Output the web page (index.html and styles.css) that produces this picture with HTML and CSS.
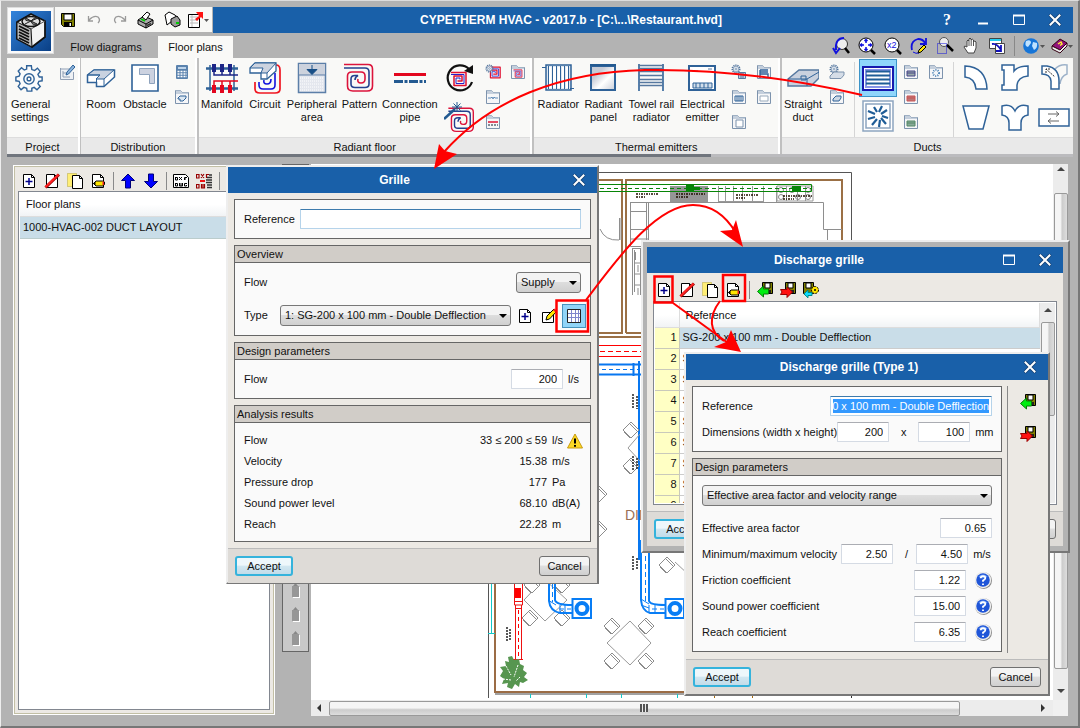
FILE: index.html
```html
<!DOCTYPE html>
<html lang="en">
<head>
<meta charset="utf-8">
<title>CYPETHERM HVAC</title>
<link rel="stylesheet" href="styles.css">
</head>
<body>
<svg class="defs" aria-hidden="true">
  <symbol id="page" viewBox="0 0 16 16"><path d="M2.500 1.500H10.500L13.500 4.500V14.500H2.500Z" fill="#fff" stroke="#000"/><path d="M10.500 1.500V4.500H13.500" fill="none" stroke="#000"/></symbol>
  <symbol id="new" viewBox="0 0 16 16"><use href="#page"/><path d="M8 5V12M4.500 8.500H11.500" stroke="#00008b" stroke-width="1.500"/></symbol>
  <symbol id="del" viewBox="0 0 16 16"><use href="#page"/><path d="M1.500 14.500L15 1.500" stroke="#900" stroke-width="3"/><path d="M1.500 14L14.500 1.500" stroke="#f22" stroke-width="2"/></symbol>
  <symbol id="copy" viewBox="0 0 16 16"><path d="M.5.500H9.500V13.500H.5Z" fill="#ffee74" stroke="#b5a642" stroke-dasharray="1 1"/><path d="M5.500 2.500H12.500L15.500 5.500V15.500H5.500Z" fill="#fff" stroke="#000"/><path d="M12.500 2.500V5.500H15.500" fill="none" stroke="#000"/></symbol>
  <symbol id="edit" viewBox="0 0 16 16"><use href="#page"/><path d="M3.500 10.500L6 8H12.500L14.500 9V11.500L13 13H6Z" fill="#ffe600" stroke="#000"/><path d="M12.500 8.500H14V12H12.500Z" fill="#e22"/><path d="M3 10.500L5.500 8.500V12.500Z" fill="#000"/></symbol>
  <symbol id="pencil" viewBox="0 0 16 16"><path d="M1.500 4.500H12.500V14.500H1.500Z" fill="#fff" stroke="#000"/><path d="M5 12L6 8L13 1L15.500 3.500L8.500 11Z" fill="#ffe600" stroke="#000"/><path d="M12 2L13.500.5L16 3L14.500 4.500Z" fill="#e22"/></symbol>
  <symbol id="disk" viewBox="0 0 16 16"><path d="M1.500 1.500H14.500V14.500H3.500L1.500 12.500Z" fill="#808000" stroke="#000"/><path d="M4 2H12V8H4Z" fill="#fff" stroke="#000"/><path d="M4 10H12V14H4Z" fill="#000"/><path d="M9.500 11H11V14H9.500Z" fill="#fff"/></symbol>
  <symbol id="diskin" viewBox="0 0 16 16"><path d="M5.500.5H15.500V11.500H5.500Z" fill="#808000" stroke="#000"/><path d="M8 1H13V6H8Z" fill="#fff" stroke="#000"/><path d="M9 8H14V11H9Z" fill="#222"/><path d="M.5 9.500L6.500 4V7H11.500V12H6.500V15Z" fill="#0e1" stroke="#087a08"/></symbol>
  <symbol id="diskout" viewBox="0 0 16 16"><path d="M5.500.5H15.500V11.500H5.500Z" fill="#808000" stroke="#000"/><path d="M8 1H13V6H8Z" fill="#fff" stroke="#000"/><path d="M9 8H14V11H9Z" fill="#222"/><path d="M12.500 10L7 5V7.500H.5L2 10L.5 12.500H7V15.500Z" fill="#f11" stroke="#900"/></symbol>
  <symbol id="diskset" viewBox="0 0 16 16"><path d="M.5.500H10.500V11.500H.5Z" fill="#808000" stroke="#000"/><path d="M3 1H8V6H3Z" fill="#fff" stroke="#000"/><circle cx="12" cy="8" r="3.500" fill="#ffe600" stroke="#000" stroke-dasharray="2 1"/><circle cx="12" cy="8" r="1" fill="#000"/><path d="M1 12L5 8V10.500H9V13.500H5V15.800Z" fill="#1df" stroke="#088"/></symbol>
  <symbol id="close" viewBox="0 0 16 16"><path d="M3.500 3.500L12.500 12.500M12.500 3.500L3.500 12.500" stroke="#123f72" stroke-width="3.500" stroke-linecap="round"/><path d="M3.500 3.500L12.500 12.500M12.500 3.500L3.500 12.500" stroke="#fff" stroke-width="2" stroke-linecap="square"/></symbol>
  <symbol id="max" viewBox="0 0 16 16"><path d="M2.500 3.500H13.500V12.500H2.500Z" fill="none" stroke="#fff"/><path d="M2 3.500H14" stroke="#fff" stroke-width="2"/></symbol>
  <symbol id="tabbed" viewBox="0 0 16 16"><path d="M1.500 1.500H6.500L8 3.500H14.500V14.500H1.500Z" fill="#f5f6f8" stroke="#7d93ad"/><path d="M2 5H14V3.500H8L6.500 1.500H2Z" fill="#c4cfdc"/></symbol>
  <symbol id="coil" viewBox="0 0 16 16"><g fill="none"><path d="M0 1.500H15V14.500H3V5H11V10H6.500" stroke="#e01030" stroke-width="1.500" stroke-linejoin="round"/><path d="M0 3.500H13V12.500H5V7H9V8.500" stroke="#22c" stroke-width="1"/></g></symbol>
  <symbol id="gear" viewBox="0 0 16 16"><circle cx="8" cy="8" r="6" fill="none" stroke="#56789f" stroke-width="2.500" stroke-dasharray="2 1.300"/><circle cx="8" cy="8" r="4.500" fill="#e9eef4" stroke="#56789f"/><circle cx="8" cy="8" r="1.500" fill="#fff" stroke="#56789f"/></symbol>
  <symbol id="spiral" viewBox="0 0 32 32"><g fill="none"><path d="M1 2.500H25Q29.500 2.500 29.500 7V24Q29.500 29 24 29H10Q4.500 29 4.500 24V14Q4.500 10 9 10H18Q22 10 22 14V17Q22 21 18 21Q14 21 15 17" stroke="#dc143c" stroke-width="1.600"/><path d="M1 6H22Q26 6 26 10V22Q26 25.500 22 25.500H12Q8 25.500 8 22V17Q8 13.500 12 13.500H15Q12 15 12 18" stroke="#24408e" stroke-width="1.600"/></g></symbol>
  <symbol id="help" viewBox="0 0 16 16"><circle cx="8.500" cy="8.500" r="7.500" fill="#888"/><circle cx="8" cy="8" r="7.300" fill="#eee"/><circle cx="8" cy="8" r="6" fill="#1f55d8"/><path d="M4 5A5 5 0 0 1 12 5Q8 8 4 5" fill="#6a9bf2"/><path d="M6 6.500Q6 4.500 8 4.500Q10.200 4.500 10 6.500Q9.800 7.500 8 8.500V9.500M8 11V12.500" fill="none" stroke="#fff" stroke-width="1.600"/></symbol>
  <symbol id="chair" viewBox="-9 -9 18 18"><path d="M0 -8L8 0L0 8L-8 0ZM-1 -6L6 1M-7 2L-1 8" fill="#fff" stroke="#8c8c8c"/></symbol>
  <symbol id="sidebtn" viewBox="0 0 12 18"><path d="M3 5H10V16H3Z" fill="#fff"/><path d="M2 4H9V15H2Z" fill="#979797"/><path d="M3 4L5.500 1L8 4Z" fill="#888"/></symbol>
</svg>

<div class="app">
  <header class="top">
    <button class="logo" aria-label="Application menu">
      <svg viewBox="0 0 40 40"><defs><linearGradient id="lg" x1="0" y1="0" x2="1" y2="1"><stop offset="0" stop-color="#3384dc"/><stop offset="1" stop-color="#0a3f85"/></linearGradient></defs><rect width="40" height="40" fill="url(#lg)"/><path d="M20 3L34 10V26L21 36L6 28V11Z" fill="#f4f4f4" stroke="#111" stroke-width="1.800" stroke-linejoin="round"/><path d="M6 11L20 18L21 36L6 28Z" fill="#bbb" stroke="#111"/><path d="M20 18L34 10" stroke="#555"/><path d="M8 15L18 20M8 18L18 23M8 21L18 26M8 24L18 29M8 27L18 32" stroke="#111" stroke-width="1.800"/><ellipse cx="20" cy="10.500" rx="9" ry="5" fill="#ddd" stroke="#111" stroke-width="1.500"/><path d="M20 10L15 7Q12 10 20 10L27 7Q25 5 20 10L26 13Q22 16 20 10L14 13" fill="#777" stroke="#222"/></svg>
    </button>
    <div class="head">
      <div class="titlerow">
        <div class="quick">
          <button aria-label="Save"><svg class="i16" ><use href="#disk"/></svg></button>
          <button aria-label="Undo"><svg class="i16" viewBox="0 0 16 16"><path d="M3 8Q8 3 12 5Q15 8 12 11M2.500 4V9H7" fill="none" stroke="#9a9a9a" stroke-width="1.300"/></svg></button>
          <button aria-label="Redo"><svg class="i16" viewBox="0 0 16 16"><path d="M13 8Q8 3 4 5Q1 8 4 11M13.500 4V9H9" fill="none" stroke="#9a9a9a" stroke-width="1.300"/></svg></button>
          <button aria-label="Print"><svg class="i18" viewBox="0 0 18 18"><path d="M1 9L7 5L16 9V13L9 17L1 13Z" fill="#aaa" stroke="#000"/><path d="M1 9L9 13L16 9M9 13V17" fill="none" stroke="#000"/><path d="M5 6L10 1L13 3L9 9Z" fill="#fff" stroke="#000"/><path d="M4 8L8 10" stroke="#0c0" stroke-width="1.500"/><path d="M10 14.500L14 12.500" stroke="#333" stroke-width="1.500"/></svg></button>
          <button aria-label="Print view"><svg class="i18" viewBox="0 0 18 18"><path d="M2 4L6 1L12 4L15 8L9 10L4 14Z" fill="#fff" stroke="#000"/><path d="M8 8L14 5L17 9V14L12 16L8 13Z" fill="#999" stroke="#000"/><path d="M13 12H16" stroke="#0c0" stroke-width="2"/></svg></button>
          <button aria-label="Export"><svg class="i18 wide" viewBox="0 0 22 18"><path d="M1.500 3.500H12.500V16.500H1.500Z" fill="#fff" stroke="#000"/><path d="M3 6H11M3 9H11M3 12H11M5 4V16" stroke="#bbb"/><path d="M8 8L12 5L9 1H16V8L14 6L10 10Z" fill="#f11"/><path d="M17 8H22L19.500 11Z" fill="#555"/></svg></button>
        </div>
        <div class="titlebar">
          <span class="title">CYPETHERM HVAC - v2017.b - [C:\...\Restaurant.hvd]</span>
          <button class="wb q" aria-label="Help">?</button>
          <button class="wb" aria-label="Minimize"><svg class="i16" viewBox="0 0 16 16"><path d="M3 11.500H13" stroke="#fff" stroke-width="2"/></svg></button>
          <button class="wb" aria-label="Maximize"><svg class="i16"><use href="#max"/></svg></button>
          <button class="wb" aria-label="Close"><svg class="i16"><use href="#close"/></svg></button>
        </div>
      </div>
      <div class="tabrow">
        <button class="tab first">Flow diagrams</button>
        <button class="tab on">Floor plans</button>
        <div class="views">
          <button aria-label="Zoom previous"><svg class="i18" viewBox="0 0 18 18"><circle cx="10" cy="7" r="5.500" fill="#eee" stroke="#333"/><path d="M13 11L17 16" stroke="#000" stroke-width="2.500"/><path d="M12 1Q3 1 4 13M1 11L4 16L8 11" fill="none" stroke="#11d" stroke-width="2"/></svg></button>
          <button aria-label="Zoom all"><svg class="i18" viewBox="0 0 18 18"><circle cx="8" cy="8" r="7" fill="#fff" stroke="#000"/><path d="M13 13L17 17" stroke="#000" stroke-width="2.500"/><path d="M8 2V6M8 10V14M2 8H6M10 8H14M6.500 4L8 2.500L9.500 4M6.500 12L8 13.500L9.500 12M4 6.500L2.500 8L4 9.500M12 6.500L13.500 8L12 9.500" fill="none" stroke="#11d" stroke-width="1.500"/></svg></button>
          <button aria-label="Zoom x2"><svg class="i18" viewBox="0 0 18 18"><circle cx="8" cy="8" r="7" fill="#fff" stroke="#000"/><path d="M13 13L17 17" stroke="#000" stroke-width="2.500"/><text x="3" y="11" font-family="Liberation Sans, sans-serif" font-size="9" fill="#11d">x2</text></svg></button>
          <button aria-label="Redraw"><svg class="i18" viewBox="0 0 18 18"><path d="M2 13Q0 4 8 2Q13 2 15 6M16 1V7H10" fill="none" stroke="#11d" stroke-width="1.800"/><path d="M3 15Q6 17 9 16" fill="none" stroke="#11d"/><path d="M8 16L9 13L14 8L16 10L11 15Z" fill="#ffe600" stroke="#000"/></svg></button>
          <button aria-label="Zoom window"><svg class="i18" viewBox="0 0 18 18"><circle cx="8" cy="5" r="4.500" fill="#eee" stroke="#555"/><path d="M11 8L17 14" stroke="#000" stroke-width="2.500"/><path d="M1.500 6.500H10.500V16.500H1.500Z" fill="none" stroke="#11d" stroke-dasharray="1 1"/></svg></button>
          <button aria-label="Pan"><svg class="i18" viewBox="0 0 18 18"><path d="M6 16L2 10Q2 8 5 10V4Q6 2 7 4V2Q8 0 9 2V3Q10 1 11.500 3V5Q13 3 14 5V11L12 16Z" fill="#fff" stroke="#444"/><path d="M7 4V9M9.200 3V9M11.500 5V9" stroke="#555"/></svg></button>
          <button aria-label="Window"><svg class="i18" viewBox="0 0 18 18"><path d="M1.500 1.500H13.500V11.500H1.500Z" fill="#fff" stroke="#444"/><path d="M2 2H13V4H2Z" fill="#2ce"/><path d="M7.500 6.500H16.500V16.500H7.500Z" fill="#fff" stroke="#444"/><path d="M4 7Q9 6 13 13M13 8V14H8" fill="none" stroke="#11b" stroke-width="1.800"/></svg></button>
          <span class="vsep"></span>
          <button aria-label="Web"><svg class="i18 wide" viewBox="0 0 22 18"><circle cx="8" cy="9" r="7.800" fill="#1675d8"/><path d="M3 4Q8 2 8 6L5 10Q1 9 3 4M10 5L14 6Q15 11 11 13L9 9Z" fill="#bfe2ff"/><path d="M17 8H22L19.500 11Z" fill="#555"/></svg></button>
          <button aria-label="Manual"><svg class="i18 wide" viewBox="0 0 22 18"><path d="M1 9L9 2L16 6L9 13Z" fill="#92127c" stroke="#301"/><path d="M1 9V12L9 16L16 9V6L9 13Z" fill="#eee" stroke="#301"/><path d="M7 7L10 5L11 7L9 8.500" fill="none" stroke="#fe3" stroke-width="1.500"/><path d="M17 8H22L19.500 11Z" fill="#555"/></svg></button>
        </div>
      </div>
    </div>
  </header>

  <nav class="ribbon">
    <section class="group g-project">
      <div class="items">
        <button class="big left w50"><svg class="i32" viewBox="0 0 32 32"><path d="M13.500 3H18.500L19 7L22 8L25 5.500L28 9L25.500 12L27 15H30V19L26.500 19.500L25.500 22L28 25L24.500 28.500L21.500 26L19 27V30H14L13.500 27L10.500 26L7.500 28.500L4.500 25L6.500 22L5.500 19.500L2 19V15L5.500 14L6.500 11.500L4.500 8.500L8 5L11 7.500L13.500 6.500Z" fill="#fafbfc" stroke="#2f6298" stroke-width="1.500"/><circle cx="16" cy="17" r="5.500" fill="none" stroke="#2f6298" stroke-width="1.500"/><circle cx="16" cy="17" r="2" fill="none" stroke="#2f6298" stroke-width="1.500"/></svg><span>General<br>settings</span></button>
        <div class="smalls w20"><button aria-label="Drawing options"><svg class="i16" viewBox="0 0 16 16"><path d="M1 5H11M1.500 4V15.500H14.500V8M4 7V13H11M4 9H8" fill="#eef1f5" stroke="#91a0b5"/><path d="M7 11L8 8L14 1L16 3L9.500 10Z" fill="#8bb3dc" stroke="#2f6298"/></svg></button></div>
      </div>
      <h2>Project</h2>
    </section>
    <section class="group g-dist">
      <div class="items">
        <button class="big w40"><svg class="i32" viewBox="0 0 32 32"><path d="M2.500 13L9 8H29.500V15L19 24.500H11.500V20.500H2.500Z" fill="#fff" stroke="#2f6298" stroke-width="1.500"/><path d="M2.500 13L9 8H29L19 17H11L15 13Z" fill="#c9d2e0" stroke="#2f6298"/><path d="M19 17V24M11.500 17V21M2.500 13H15" stroke="#2f6298"/></svg><span>Room</span></button>
        <button class="big w48"><svg class="i32" viewBox="0 0 32 32"><path d="M3 3H29V29H3Z" fill="#fff" stroke="#2f6298" stroke-width="1.600"/><path d="M10.500 6.500H25.500V21.500H20.500V12.500H10.500Z" fill="#ccd2e0" stroke="#8fa3bd"/></svg><span>Obstacle</span></button>
        <div class="smalls w26"><button aria-label="Loads"><svg class="i16" viewBox="0 0 16 16"><rect x="2" y="1" width="12" height="14" rx="1" fill="#5a82ad"/><path d="M4 3H12V5H4Z" fill="#bcd3ea"/><path d="M3.500 7.500H13M3.500 10H13M3.500 12.500H13" stroke="#fff" stroke-width="1.300" stroke-dasharray="2 1"/></svg></button><button aria-label="Room list"><svg class="i16" viewBox="0 0 16 16"><use href="#tabbed"/><path d="M4 9L6 7H12V9L9 12H6V10H4Z" fill="#dbe7f2" stroke="#2f6298"/></svg></button></div>
      </div>
      <h2>Distribution</h2>
    </section>
    <section class="group g-radiant">
      <div class="items">
        <button class="big w46"><svg class="i32" viewBox="0 0 32 32"><path d="M4 3V29M28 3V29" stroke="#2f6298" stroke-width="1.500"/><path d="M0 6.500H32M0 26.500H32" stroke="#2f6298" stroke-width="2.500"/><path d="M8 2V10M16 2V10M24 2V10" stroke="#1c2586" stroke-width="4"/><path d="M8 8V13H32M16 8V13M24 8V13" fill="none" stroke="#1c2586" stroke-width="1.500"/><path d="M8 23V31M16 23V31M24 23V31" stroke="#e3061e" stroke-width="4"/><path d="M8 25V19H32M16 25V19M24 25V19" fill="none" stroke="#e3061e" stroke-width="1.500"/></svg><span>Manifold</span></button>
        <button class="big w40"><svg class="i32" viewBox="0 0 32 32"><path d="M24 3H27Q31 3 31 8V27Q31 31 26 31H11Q6 31 6 27V20" fill="none" stroke="#f01722" stroke-width="1.700"/><path d="M26 11V23Q26 27 22 27H14Q10 27 10 23V20M22 17Q22 22 18 22Q14 22 15 18" fill="none" stroke="#11d" stroke-width="1.600"/><path d="M1 6L6 1H27V9L18 17H12V11H1Z" fill="#fff" stroke="#2f6298" stroke-width="1.300"/><path d="M1 6L6 1H27L18 11H12L14 6Z" fill="#ccd3df" stroke="#2f6298"/><path d="M18 11V17" fill="none" stroke="#2f6298"/></svg><span>Circuit</span></button>
        <button class="big w54"><svg class="i32" viewBox="0 0 32 32"><path d="M2.500 1.500H29.500V30.500H2.500Z" fill="#e4e7ee" stroke="#5c7fa8" stroke-width="1.500"/><path d="M3 2H29V13H3Z" fill="#ccd2dd"/><path d="M3 13H29" stroke="#5c7fa8"/><path d="M4 16H28M4 19H28M4 22H28M4 25H28M4 28H28" stroke="#fff" stroke-dasharray="1 1"/><path d="M16 3V8M11 7.500H21L16 12.500Z" fill="#174e86" stroke="#174e86"/></svg><span>Peripheral<br>area</span></button>
        <button class="big w41"><svg class="i32"><use href="#spiral"/></svg><span>Pattern</span></button>
        <button class="big w60"><svg class="i32" viewBox="0 0 32 32"><path d="M0 12.500H32" stroke="#e3061e" stroke-width="3"/><path d="M0 19.500H32" stroke="#235a91" stroke-width="3" stroke-dasharray="9 1.500 3 1.500"/></svg><span>Connection<br>pipe</span></button>
        <div class="pair w40"><button aria-label="Rotate coil"><svg class="i32" viewBox="0 0 32 32"><path d="M25 7A12.500 12.500 0 1 0 28 20" fill="none" stroke="#111" stroke-width="2.200"/><path d="M29 3V12L20 9Z" fill="#111"/><svg x="7" y="9" width="16" height="16"><use href="#coil"/></svg></svg></button><button aria-label="Coil wizard"><svg class="i32" viewBox="0 0 32 32"><svg x="3" y="4" width="29" height="28" viewBox="0 0 32 32"><use href="#spiral"/></svg><path d="M0 17L11 7" stroke="#235a91" stroke-width="2.500"/><path d="M13 0V10M8 5H18M9.500 1.500L16.500 8.500M16.500 1.500L9.500 8.500" stroke="#235a91"/></svg></button></div>
        <div class="smalls w26"><button aria-label="Coil settings"><svg class="i16" viewBox="0 0 16 16"><svg x="3" y="2" width="13" height="13"><use href="#coil"/></svg><svg width="9" height="9"><use href="#gear"/></svg></svg></button><button aria-label="Pipe list"><svg class="i16" viewBox="0 0 16 16"><use href="#tabbed"/><path d="M3 9L6 9L7 8L8 10L9 8L10 9H13" fill="none" stroke="#5f8bb8"/></svg></button><button aria-label="Connection list"><svg class="i16" viewBox="0 0 16 16"><use href="#tabbed"/><path d="M3 8H13" stroke="#e01030" stroke-width="1.500"/><path d="M3 11H13" stroke="#123" stroke-dasharray="2 1"/></svg></button></div>
        <div class="smalls w24"><button aria-label="Coil list"><svg class="i16" viewBox="0 0 16 16"><use href="#tabbed"/><svg x="3" y="5" width="10" height="9"><use href="#coil"/></svg></svg></button></div>
      </div>
      <h2>Radiant floor</h2>
    </section>
    <section class="group g-thermal">
      <div class="items">
        <button class="big w48"><svg class="i32" viewBox="0 0 32 32"><path d="M4 3H29V28H4Z" fill="#dfe8f1" stroke="#2f6298" stroke-width="1.500"/><path d="M8 5V26M12.500 5V26M17 5V26M21.500 5V26M25.500 5V26" stroke="#fff" stroke-width="3"/><path d="M6.500 4V27M10.500 4V27M14.500 4V27M18.500 4V27M22.500 4V27M26.500 4V27" stroke="#2f6298"/><path d="M0 5.500H4M28 26.500H32" stroke="#2f6298"/></svg><span>Radiator</span></button>
        <button class="big w42"><svg class="i32" viewBox="0 0 32 32"><defs><linearGradient id="pg" x1="0" y1="0" x2="1" y2="1"><stop offset=".3" stop-color="#c6cbd6"/><stop offset=".6" stop-color="#fff"/><stop offset="1" stop-color="#c9ced8"/></linearGradient></defs><path d="M4 4H28V28H4Z" fill="url(#pg)" stroke="#2f6298" stroke-width="2"/><path d="M3 3H29" stroke="#235a91" stroke-width="2"/></svg><span>Radiant<br>panel</span></button>
        <button class="big w54"><svg class="i32" viewBox="0 0 32 32"><path d="M4 2V29M28 2V29" stroke="#2f6298" stroke-width="1.600"/><path d="M3 3.500H29M4 6.500H28M4 9.500H28M4 13.500H28M4 17.500H28M4 20.500H28M4 23.500H28" stroke="#56789f" stroke-width="1.400"/></svg><span>Towel rail<br>radiator</span></button>
        <button class="big w48"><svg class="i32" viewBox="0 0 32 32"><path d="M3 4H29V28H3Z" fill="#fff" stroke="#2f6298" stroke-width="2"/><path d="M6 9H12M22 7H26" stroke="#56789f"/><path d="M7 21H26V26H7ZM10 21V26M14 21V26M18 21V26M22 21V26" fill="#d3dfeb" stroke="#2f6298"/></svg><span>Electrical<br>emitter</span></button>
        <div class="smalls w26"><button aria-label="Emitter settings"><svg class="i16" viewBox="0 0 16 16"><svg width="10" height="10"><use href="#gear"/></svg><path d="M7.500 8.500H14.500V14.500H7.500ZM10 9V14M12 9V14" fill="#bccddf" stroke="#56789f"/></svg></button><button aria-label="Radiator list"><svg class="i16" viewBox="0 0 16 16"><use href="#tabbed"/><path d="M4 7H12V12H4ZM6 7V12M8 7V12M10 7V12" fill="none" stroke="#2f6298"/></svg></button><button aria-label="Panel list"><svg class="i16" viewBox="0 0 16 16"><use href="#tabbed"/><path d="M5 6H12V13H5Z" fill="#fff" stroke="#7d93ad"/></svg></button></div>
        <div class="smalls w24"><button aria-label="Towel rail list"><svg class="i16" viewBox="0 0 16 16"><use href="#tabbed"/><path d="M4 6H12M4 8H12M4 10H12V14M4 6V14" stroke="#2f6298" fill="none" stroke-width="1.400"/></svg></button><button aria-label="Electrical list"><svg class="i16" viewBox="0 0 16 16"><use href="#tabbed"/><path d="M4 7H12V12H4Z" fill="#fff" stroke="#9ab"/></svg></button></div>
      </div>
      <h2>Thermal emitters</h2>
    </section>
    <section class="group g-ducts">
      <div class="items">
        <button class="big w42"><svg class="i32" viewBox="0 0 32 32"><path d="M1 17L12 8H32V16L24 24H1Z" fill="#c9d1de" stroke="#56789f" stroke-width="1.500"/><path d="M1 17H20V24M20 17L32 10M14 17V14H19V18H14" fill="none" stroke="#2f6298"/></svg><span>Straight<br>duct</span></button>
        <div class="smalls w26"><button aria-label="Duct settings"><svg class="i16" viewBox="0 0 16 16"><svg width="10" height="10"><use href="#gear"/></svg><path d="M1 12L5 8H15V11L12 14.500H1Z" fill="#d5dde7" stroke="#7d93ad"/></svg></button><button aria-label="Duct list"><svg class="i16" viewBox="0 0 16 16"><use href="#tabbed"/><path d="M4 10L7 7H12V9L10 12H4Z" fill="#cdd8e4" stroke="#2f6298"/></svg></button></div>
        <span class="isep"></span>
        <div class="pair tight w42"><button class="active" aria-label="Grille"><svg class="i32" viewBox="0 0 32 32"><path d="M1 5H31V28H1Z" fill="#fff" stroke="#1719ae" stroke-width="2"/><path d="M4 8H28V25H4Z" fill="none" stroke="#8796e8" stroke-width="2"/><path d="M4 9.500H28M4 13.500H28M4 17.500H28M4 21.500H28" stroke="#1f5d97" stroke-width="2"/></svg></button><button aria-label="Diffuser"><svg class="i32" viewBox="0 0 32 32"><path d="M1 1H31V31H1ZM4 4H28V28H4Z" fill="#fff" stroke="#8da5c0" stroke-width="1.500"/><g stroke="#1f5d97" stroke-width="2.200"><path d="M12 7L15 12M20 6L17 12M25 10L19 14M26 18L20 16M24 24L19 18M17 27L18 20M10 25L15 19M6 19L13 17M6 11L13 14"/></g></svg></button></div>
        <div class="smalls w24"><button aria-label="Supply grille list"><svg class="i16" viewBox="0 0 16 16"><use href="#tabbed"/><path d="M4 7H12V12H4ZM4 9H12" fill="#9aa" stroke="#448"/></svg></button><button aria-label="Return grille list"><svg class="i16" viewBox="0 0 16 16"><use href="#tabbed"/><path d="M4 7H12V12H4ZM4 9H12" fill="#b77" stroke="#c55"/></svg></button><button aria-label="Outdoor grille list"><svg class="i16" viewBox="0 0 16 16"><use href="#tabbed"/><path d="M4 7H12V12H4ZM4 9H12" fill="#8a9" stroke="#586"/></svg></button></div>
        <div class="smalls w26"><button aria-label="Diffuser list"><svg class="i16" viewBox="0 0 16 16"><use href="#tabbed"/><circle cx="8" cy="9" r="3" fill="none" stroke="#4c83b5" stroke-width="2" stroke-dasharray="1 1.200"/></svg></button></div>
        <span class="isep"></span>
        <div class="fittings">
          <button aria-label="Elbow"><svg class="i32" viewBox="0 0 32 32"><path d="M5 4Q26 5 27 27H16Q15 16 5 15Z" class="fit"/></svg></button>
          <button aria-label="Branch"><svg class="i32" viewBox="0 0 32 32"><path d="M3 3H15V9Q19 4 29 4V14Q19 15 18 23V28H3V23H5V8H3Z" class="fit"/></svg></button>
          <button aria-label="Split"><svg class="i32" viewBox="0 0 32 32"><path d="M17 7Q22 2 29 3V12Q23 14 22 22" fill="none" stroke="#9db2c9" stroke-width="1.500"/><path d="M4 4H9Q21 6 21 19V27H13V19Q12 12 4 12Z" class="fit"/><path d="M8 7L17 15M8 11V7H12" stroke="#333" fill="none" stroke-dasharray="2 1"/></svg></button>
          <button aria-label="Reducer"><svg class="i32" viewBox="0 0 32 32"><path d="M3 5H29L23 28H9Z" class="fit"/></svg></button>
          <button aria-label="Y branch"><svg class="i32" viewBox="0 0 32 32"><path d="M3 5Q12 2 16 10Q20 2 29 5V14Q22 15 22 22V29H10V22Q10 15 3 14Z" class="fit"/></svg></button>
          <button aria-label="Transition"><svg class="i32" viewBox="0 0 32 32"><path d="M1 8H31V25H1Z" class="fit"/><path d="M10 13H21L18 10.500M21 13L18 15.500M21 20H10L13 17.500M10 20L13 22.500" fill="none" stroke="#666"/></svg></button>
        </div>
      </div>
      <h2>Ducts</h2>
    </section>
  </nav>
  <div class="ribscroll"><span></span></div>

  <main class="work">
    <aside class="plans">
      <div class="toolbar">
        <button aria-label="New"><svg class="i16"><use href="#new"/></svg></button>
        <button aria-label="Delete"><svg class="i16"><use href="#del"/></svg></button>
        <button aria-label="Copy"><svg class="i16"><use href="#copy"/></svg></button>
        <button aria-label="Edit"><svg class="i16"><use href="#edit"/></svg></button>
        <span class="tsep"></span>
        <button aria-label="Move up"><svg class="i16" viewBox="0 0 16 16"><path d="M8 1L14.500 7.500H10.500V15H5.500V7.500H1.500Z" fill="#00f" stroke="#00007a"/></svg></button>
        <button aria-label="Move down"><svg class="i16" viewBox="0 0 16 16"><path d="M8 15L14.500 8.500H10.500V1H5.500V8.500H1.500Z" fill="#00f" stroke="#00007a"/></svg></button>
        <span class="tsep"></span>
        <button aria-label="DXF DWG files"><svg class="i16" viewBox="0 0 16 16"><path d="M.5 1.500H12.500L15.500 4.500V14.500H.5Z" fill="#fff" stroke="#000"/><path d="M2.500 4V7H4.500V4.500H2.500M6 4L9 7M9 4L6 7M11.500 7V4.500H14M11 6H13M2.500 10V13H4.500V10.500H2.500M6.500 10V13H9.500V10M8 10V13M14 10.500H11.500V13H13.500V12" fill="none" stroke="#000"/></svg></button>
        <button aria-label="DXF DWG layers"><svg class="i16" viewBox="0 0 16 16"><path d="M.5 1V5H3V1.500H.5M5 1L8 5M8 1L5 5M10.500 5V1.500H13M.5 11V15H3V11.500H.5M5.500 11V15H8.500V11M7 11V15" fill="none" stroke="#900" stroke-width="1.200"/><path d="M4 8H9" stroke="#e11" stroke-width="2"/><path d="M13 2H16M11 4.500H16M10 7H16M10 9.500H16M11 12H16M11 14.500H16" stroke="#333" stroke-width="1.500"/></svg></button>
        <span class="tsep"></span>
      </div>
      <div class="listbox">
        <table class="planlist"><thead><tr><th>Floor plans</th></tr></thead><tbody><tr><td>1000-HVAC-002 DUCT LAYOUT</td></tr></tbody></table>
      </div>
    </aside>
    <div class="sidecol"><div class="side">
      <button aria-label="Page view"><svg class="side-i"><use href="#sidebtn"/></svg></button>
      <button aria-label="Level up"><svg class="side-i"><use href="#sidebtn"/></svg></button>
      <button aria-label="Level top"><svg class="side-i"><use href="#sidebtn"/></svg></button>
    </div></div>
    <div class="view">
      <div class="canvas">
        <svg class="plan" viewBox="311 164 741 534">
          <g fill="none">
            <path d="M490 172.500H851.500V560M488.500 560V698" stroke="#555"/>
            <path d="M500 180H622V333H500M626 333V180H842V400M626 333H700M500 337H700" stroke="#9b7045" stroke-width="2"/>
            <path d="M495 560V692H1000" stroke="#9b6c45" stroke-width="2"/><path d="M495 694H1000" stroke="#444"/>
            <path d="M491.500 560V633.500M488 633.500H495M530.500 694V698M586.500 694V698M621.500 694V698M677.500 694V698" stroke="#12c8c8"/>
            <path d="M714.500 694V698M752.500 694V698" stroke="#a76c12"/><path d="M851.500 694V698" stroke="#333"/>
            <path d="M630.500 202.500H823.500V229.500H842M827.500 230V300M630.500 202V246.500H648.500V202M630.500 211.500H646.500M630.500 229.500H648M630.500 239H648M646.500 202V246M600 229Q605 241 619 240M619.500 240V218M621 240V218M632.500 248V295M632 248.500H640M634.500 250V292M634 263H641M634 274H641M634 285H641M635.500 252V260M638 265V272M638 288V295M640.500 248V295" stroke="#8e8e8e"/>
            <path d="M670 186H708V202H670Z" fill="#969696"/>
            <path d="M718.500 186V202M725.500 186V202M733.500 186V202M742.500 186V202M752.500 186V202M763.500 186V202M776.500 186V202M718 201.500H763M777 186H813V201H777ZM786.500 186V201M797.500 186V201M805.500 186V201" stroke="#999"/>
            <g stroke="#888"><circle cx="781" cy="190" r="2.500"/><circle cx="792" cy="190" r="2.500"/><circle cx="781" cy="197" r="2.500"/><circle cx="798" cy="197" r="2.500"/><circle cx="808" cy="190" r="2.500"/><circle cx="808" cy="197" r="2.500"/></g>
            <path d="M500 184.500H811.500V191.500H500" stroke="#078507"/><path d="M600 188.500H811" stroke="#078507" stroke-dasharray="4 3"/>
            <path d="M686 185H694V187H700V190H694V192H686ZM792 186H801V191H797V192H792Z" fill="#078507"/>
            <g stroke="#221100" stroke-width="1.500" stroke-dasharray="2 1 1 1"><path d="M636 194H659M636 197H646M676 194H706M676 197H688M736 195H758M736 198H745M783 196H812M783 199H794"/></g>
            <path d="M500 345.500H700M500 356.500H700" stroke="#f00"/><path d="M600 351.500H641" stroke="#f00" stroke-dasharray="5 3"/>
            <path d="M500 364.500H641M500 374.500H641M633.500 363V376M639 361V560" stroke="#0877f0" stroke-width="2"/><path d="M602 369.500H640" stroke="#0877f0" stroke-dasharray="4 3"/>
            <path d="M641 540V600Q642 611 650 613H665M649 540V601Q650 605 665 605" stroke="#087df5" stroke-width="2"/><path d="M645.500 540V602M652 609H664" stroke="#087df5" stroke-dasharray="5 3"/><path d="M641 599L649 604M641 605L649 608M649 605V613M655 605V613" stroke="#087df5"/>
            <g stroke="#999"><path d="M544 579L567 600L545 621L524 600Z"/><use href="#chair" x="521" y="609" width="18" height="18"/><use href="#chair" x="553" y="609" width="18" height="18"/><use href="#chair" x="523" y="576" width="18" height="18"/><use href="#chair" x="553" y="576" width="18" height="18"/><path d="M630 621L651 643L630 665L607 643Z"/><use href="#chair" x="603" y="617" width="18" height="18"/><use href="#chair" x="637" y="617" width="18" height="18"/><use href="#chair" x="603" y="652" width="18" height="18"/><use href="#chair" x="637" y="652" width="18" height="18"/><use href="#chair" x="658" y="556" width="18" height="18"/><path d="M675 562L690 576"/><use href="#chair" x="622" y="421" width="18" height="18"/><use href="#chair" x="622" y="457" width="18" height="18"/><path d="M640 434L628 448L640 461"/><use href="#chair" x="590" y="485" width="18" height="18"/><use href="#chair" x="590" y="520" width="18" height="18"/></g>
            <path d="M549 570V601Q550 611 560 613H572M555 570V600Q556 605 572 605" stroke="#087df5" stroke-width="2"/><path d="M552.500 584V602M559 609H571" stroke="#087df5" stroke-dasharray="5 3"/><path d="M548 600L556 605M560 605V613M565 605V613" stroke="#087df5"/>
            <g stroke="#087df5" stroke-width="2"><path d="M572.500 599H591V618H572.500ZM665.500 599H684V618H665.500Z" fill="#fff"/><circle cx="582" cy="608.500" r="5.500" stroke-width="4"/><circle cx="675" cy="608.500" r="5.500" stroke-width="4"/></g>
            <path d="M514.500 570V605H522.500V570M515.500 605V659M521.500 605V659M513 659.500H523M514 601.500H523M515 608.500H522" stroke="#e11"/><path d="M515 588H521V598H515Z" fill="#f00"/><path d="M518.500 610V658" stroke="#f00" stroke-dasharray="4 3"/>
            <g stroke="#222" stroke-width="1.500" stroke-dasharray="2 1"><path d="M633 394V408M637 396V409M633 456V470M637 458V470M633 556V570M637 558V570M507 627V641M510 629V641"/></g>
          </g>
          <path d="M508 657L512 656L514 660L519 659L520 664L524 666L523 670L527 673L524 677L528 680L523 683L520 682L519 687L515 684L512 689L507 687L508 683L502 684L504 679L500 676L503 671L500 667L506 666L505 661L509 662Z" fill="#579650"/><path d="M506 666L511 675M518 665L514 677M503 679L511 680M520 677L516 681" stroke="#fff" stroke-width="1" stroke-dasharray="2 1"/>
          <text x="625" y="520" class="room">DINING</text>
        </svg>
      </div>
      <div class="vbar"><i class="up"></i><span></span><i class="down"></i></div>
      <div class="hbar"><i class="lf"></i><span><b></b></span><i class="rt"></i></div>
    </div>
  </main>
</div>

<section class="dlg grille" role="dialog" aria-label="Grille">
  <div class="dtitle"><span>Grille</span><button class="wb" aria-label="Close"><svg class="i16"><use href="#close"/></svg></button></div>
  <div class="dbody">
    <div class="box"><div class="content"><div class="row"><label for="ref">Reference</label><input id="ref" class="focus grow" type="text"></div></div></div>
    <div class="box"><h3>Overview</h3><div class="content tall">
      <div class="row h21"><label class="grow" for="flow">Flow</label><span class="sel w65"><select id="flow"><option>Supply</option></select></span></div>
      <div class="row h21"><label class="typelab" for="type">Type</label><span class="sel grow"><select id="type"><option>1: SG-200 x 100 mm - Double Defflection</option></select></span>
        <div class="typebtns"><button aria-label="New type"><svg class="i16"><use href="#new"/></svg></button><button aria-label="Edit type"><svg class="i16"><use href="#pencil"/></svg></button><button class="gridbtn" aria-label="Type list"><svg class="i16" viewBox="0 0 16 16"><path d="M1.500 1.500H14.500V14.500H1.500Z" fill="#fff" stroke="#222"/><path d="M2 5.500H14M2 9.500H14M5.500 2V14M9.500 2V14M12.500 2V14" stroke="#7f86cc"/></svg></button></div></div>
    </div></div>
    <div class="box"><h3>Design parameters</h3><div class="content"><div class="row"><label class="grow" for="dflow">Flow</label><input id="dflow" class="num" value="200"><span class="unit">l/s</span></div></div></div>
    <div class="box"><h3>Analysis results</h3>
      <table class="results"><tbody>
        <tr><th>Flow</th><td>33 ≤ 200 ≤ 59</td><td class="u"><span>l/s<svg class="i16" viewBox="0 0 16 16"><path d="M8 1L15.500 15H.5Z" fill="#fbd824" stroke="#c89b12" stroke-linejoin="round"/><path d="M8 5.500V10.500M8 12V13.800" stroke="#000" stroke-width="2"/></svg></span></td></tr>
        <tr><th>Velocity</th><td>15.38</td><td class="u">m/s</td></tr>
        <tr><th>Pressure drop</th><td>177</td><td class="u">Pa</td></tr>
        <tr><th>Sound power level</th><td>68.10</td><td class="u">dB(A)</td></tr>
        <tr><th>Reach</th><td>22.28</td><td class="u">m</td></tr>
      </tbody></table>
    </div>
  </div>
  <footer><button class="btn ok">Accept</button><button class="btn">Cancel</button></footer>
</section>

<section class="dlg discharge" role="dialog" aria-label="Discharge grille">
  <div class="dtitle"><span>Discharge grille</span><button class="wb" aria-label="Maximize"><svg class="i16"><use href="#max"/></svg></button><button class="wb" aria-label="Close"><svg class="i16"><use href="#close"/></svg></button></div>
  <div class="dbody listbody">
    <div class="toolbar">
      <button aria-label="New"><svg class="i16"><use href="#new"/></svg></button>
      <button aria-label="Delete"><svg class="i16"><use href="#del"/></svg></button>
      <button aria-label="Copy"><svg class="i16"><use href="#copy"/></svg></button>
      <button aria-label="Edit"><svg class="i16"><use href="#edit"/></svg></button>
      <span class="tsep"></span>
      <button aria-label="Import"><svg class="i16"><use href="#diskin"/></svg></button>
      <button aria-label="Export"><svg class="i16"><use href="#diskout"/></svg></button>
      <button aria-label="Library options"><svg class="i16"><use href="#diskset"/></svg></button>
    </div>
    <div class="tablebox">
      <div class="clip"><table class="types"><thead><tr><th></th><th>Reference</th></tr></thead><tbody>
        <tr class="cur"><th>1</th><td>SG-200 x 100 mm - Double Defflection</td></tr>
        <tr><th>2</th><td>S</td></tr><tr><th>3</th><td>S</td></tr><tr><th>4</th><td>S</td></tr><tr><th>5</th><td>S</td></tr><tr><th>6</th><td>S</td></tr><tr><th>7</th><td>S</td></tr><tr><th>8</th><td>S</td></tr><tr><th>9</th><td>S</td></tr>
      </tbody></table></div>
      <div class="vbar"><i class="up"></i><span class="short"></span></div>
    </div>
  </div>
  <footer><button class="btn ok">Accept</button><button class="btn">Cancel</button></footer>
</section>

<section class="dlg type1" role="dialog" aria-label="Discharge grille (Type 1)">
  <div class="dtitle"><span>Discharge grille (Type 1)</span><button class="wb" aria-label="Close"><svg class="i16"><use href="#close"/></svg></button></div>
  <div class="split">
    <div class="dbody">
      <div class="box"><div class="content">
        <div class="row"><label class="grow" for="tref">Reference</label><input id="tref" class="focus picked" type="text" value="SG-200 x 100 mm - Double Defflection"></div>
        <div class="row"><label class="grow" for="dw">Dimensions (width x height)</label><input id="dw" class="num" value="200"><span class="mid wide29">x</span><input class="num" aria-label="Height" value="100"><span class="unit u22">mm</span></div>
      </div></div>
      <div class="box"><h3>Design parameters</h3><div class="content">
        <div class="row h21 last"><span class="sel grow"><select aria-label="Method"><option>Effective area factor and velocity range</option></select></span></div>
        <div class="row"><label class="grow" for="eaf">Effective area factor</label><input id="eaf" class="num" value="0.65"></div>
        <div class="row"><label class="grow" for="vmin">Minimum/maximum velocity</label><input id="vmin" class="num" value="2.50"><span class="mid">/</span><input class="num" aria-label="Maximum velocity" value="4.50"><span class="unit u24">m/s</span></div>
        <div class="row"><label class="grow" for="fc">Friction coefficient</label><input id="fc" class="num" value="1.22"><button class="qm" aria-label="Help"><svg class="i18"><use href="#help"/></svg></button></div>
        <div class="row"><label class="grow" for="sp">Sound power coefficient</label><input id="sp" class="num" value="15.00"><button class="qm" aria-label="Help"><svg class="i18"><use href="#help"/></svg></button></div>
        <div class="row"><label class="grow" for="rc">Reach coefficient</label><input id="rc" class="num" value="6.35"><button class="qm" aria-label="Help"><svg class="i18"><use href="#help"/></svg></button></div>
      </div></div>
    </div>
    <div class="lib"><button aria-label="Import"><svg class="i16"><use href="#diskin"/></svg></button><button aria-label="Export"><svg class="i16"><use href="#diskout"/></svg></button></div>
  </div>
  <footer><button class="btn ok">Accept</button><button class="btn">Cancel</button></footer>
</section>

<svg class="notes" viewBox="0 0 1080 728" aria-hidden="true">
  <g fill="none" stroke="#f00" stroke-width="2">
    <path d="M862 95C780 76 705 69 645 70C560 72 490 100 444 152"/>
    <path d="M586 300C615 262 655 205 693 205C712 205 726 216 736 233"/>
    <path d="M673 303L728 343"/><path d="M720 301C708 317 709 332 724 341"/>
    <path d="M654.500 276.500H672.500V302.500H654.500ZM723 275H745V301H723ZM556.500 300.500H588V331.500H556.500Z" stroke-width="2.500"/>
  </g>
  <path d="M434 169L439 144L445 151L457 154ZM743 247L720 231L732 230L736 220ZM741 352L714 347L726 342L731 330Z" fill="#f00"/>
</svg>
</body>
</html>
```

FILE: styles.css
```css
* { box-sizing: border-box; }
body { margin: 0; background: #b3b3b3; font: 11px/13px "Liberation Sans", Arial, sans-serif; color: #111; }
button, input, select { font: inherit; color: inherit; margin: 0; }
button { padding: 0; border: 0; background: none; display: flex; align-items: center; justify-content: center; flex: none; }
svg { display: block; flex: none; }
h2, h3 { margin: 0; font: inherit; }
table { border-collapse: collapse; border-spacing: 0; }
th { font-weight: normal; text-align: left; }
.defs { position: absolute; width: 0; height: 0; }
.i16 { width: 16px; height: 16px; }
.i18 { width: 18px; height: 18px; }
.i18.wide { width: 22px; }
.i32 { width: 32px; height: 32px; }
.fit { fill: #fff; stroke: #2f6298; stroke-width: 1.5px; }
.grow { flex: 1; min-width: 0; }
.w20 { width: 20px; }
.w24 { width: 24px; }
.w26 { width: 26px; }
.w40 { width: 40px; }
.w41 { width: 41px; }
.w42 { width: 42px; }
.w46 { width: 46px; }
.w48 { width: 48px; }
.w50 { width: 50px; }
.w54 { width: 54px; }
.w60 { width: 60px; }
.w65 { width: 65px; }

.app { display: flex; flex-direction: column; min-height: 100vh; padding: 5px 5px 10px; border: 1px solid #777; border-width: 1px 2px 2px 1px; border-top-color: #ddd; border-left-color: #eee; }
.top { display: flex; margin: 1px 0 0 1px; }
.logo { width: 47px; height: 47px; background: #fafafa; border: 1px solid #ddd; }
.logo svg { width: 40px; height: 40px; }
.head { flex: 1; }
.titlerow { display: flex; height: 26px; }
.quick { display: flex; align-items: center; width: 157px; height: 25px; margin: 0 1px; background: #f8f8f6; }
.quick button { width: 26px; height: 24px; }
.titlebar { display: flex; flex: 1; align-items: center; background: #1960a9; color: #fff; }
.title, .dtitle span { flex: 1; text-align: center; font-size: 12px; font-weight: bold; }
.wb { width: 36px; height: 26px; }
.q { font: bold 16px "Liberation Serif", serif; color: #fff; }
.tabrow { display: flex; align-items: flex-end; height: 25px; }
.tab { height: 22px; width: 75px; }
.tab.first { width: 104px; }
.tab.on { background: #f9f9f7; }
.views { display: flex; align-items: center; gap: 8px; height: 25px; margin-left: auto; padding-right: 2px; }
.views .wide { margin-right: -2px; }
.vsep { width: 1px; height: 20px; background: #888; }

.ribbon { display: flex; height: 96px; margin-left: 1px; background: #c0c0c0; }
.group { display: flex; flex-direction: column; background: #f9f9f7; border-right: 2px solid #fff; margin-right: 2px; }
.g-project { width: 73px; margin-right: 1px; }
.g-dist { width: 116px; }
.g-radiant { width: 334px; }
.g-thermal { width: 246px; }
.g-ducts { flex: 1; margin-right: 0; border: 0; }
.items { display: flex; flex: 1; min-height: 0; padding-top: 4px; }
.group h2 { flex: none; height: 17px; padding-top: 3px; text-align: center; background: #e9e9e9; border-top: 1px solid #ddd; }
.big { flex-direction: column; justify-content: flex-start; gap: 4px; height: 72px; }
.big span { white-space: nowrap; }
.left { align-items: flex-start; padding-left: 4px; text-align: left; }
.left svg { margin-left: 3px; width: 30px; }
.smalls { display: flex; flex-direction: column; align-items: center; gap: 9px; padding-top: 2px; }
.pair { display: flex; flex-direction: column; align-items: center; gap: 8px; }
.pair.tight { gap: 3px; margin-top: -3px; }
.active { width: 38px; height: 38px; background: #8fd6fb; border: 1px solid #3c94c8; }
.isep { width: 1px; height: 76px; margin: 0 2px 0 4px; background: #d5d5d5; }
.fittings { display: grid; grid-template-columns: repeat(3, 39px); grid-auto-rows: 32px; row-gap: 7px; }
.fittings button { width: 39px; }
.ribscroll { height: 3px; margin-left: 1px; background: #bbbbbe; }
.ribscroll span { display: block; width: 66%; height: 3px; background: #70757d; }

.work { display: flex; flex: 1; padding: 7px 5px 0 7px; }
.plans { display: flex; flex-direction: column; width: 262px; margin: 1px 0; padding: 4px; background: #ece9e4; border: 1px solid #fff; outline: 1px solid #c2bfa5; outline-offset: -2px; }
.toolbar { display: flex; align-items: center; height: 21px; gap: 3px; padding-left: 1px; }
.toolbar button { width: 20px; height: 20px; }
.tsep { width: 1px; height: 18px; margin: 0 1px 0 2px; background: #8a8a8a; }
.listbox { flex: 1; border: 1px solid #828790; background: #fff; padding: 1px; }
.planlist { width: 100%; }
.planlist th { height: 23px; padding: 0 6px; background: linear-gradient(#fff 50%, #f1f3f5); border-bottom: 1px solid #ddd; }
.planlist td { height: 22px; padding: 0 3px; background: #c9dde8; border-bottom: 1px solid #bcc; }
.sidecol { padding: 0 2px 0 7px; display: flex; align-items: flex-start; }
.side { display: flex; flex-direction: column; align-items: center; justify-content: flex-end; gap: 6px; width: 27px; height: 488px; padding-bottom: 3px; background: #c9c9c9; border: 1px solid #666; }
.side-i { width: 12px; height: 18px; }
.view { display: grid; flex: 1; grid-template: 1fr 16px / 1fr 15px; background: #f0f0f0; min-width: 0; }
.canvas { overflow: hidden; background: #fff; min-width: 0; }
.plan { width: 741px; height: 534px; }
.room { font: 14px "Liberation Sans", sans-serif; fill: #9b7055; }
.vbar { display: flex; flex-direction: column; align-items: center; background: #ececec; width: 15px; }
.vbar span { flex: 1; width: 14px; margin: 22px 0 20px; background: linear-gradient(90deg, #f5f5f5 45%, #ccc 60%, #ddd); border: 1px solid #999; border-radius: 2px; }
.vbar i, .hbar i { width: 0; height: 0; border: 4px solid transparent; }
.vbar .up { margin-top: 3px; border-top: 0; border-bottom-color: #444; }
.vbar .down { border-bottom: 0; border-top-color: #444; margin-bottom: 7px; }
.hbar { display: flex; align-items: center; background: #ececec; }
.hbar .lf { border-left: 0; border-right-color: #333; margin: 0 8px 0 6px; }
.hbar span { display: flex; justify-content: center; align-items: center; width: 85%; height: 15px; background: linear-gradient(#f5f5f5 45%, #ccc 60%, #ddd); border: 1px solid #999; border-radius: 2px; }
.hbar b { width: 8px; height: 8px; background: repeating-linear-gradient(90deg, #555 0 2px, #eee 2px 3px); }
.hbar .rt { margin: 0 8px 0 auto; border-right: 0; border-left-color: #333; }

.dlg { position: absolute; display: flex; flex-direction: column; background: #ece9e4; border: 2px solid #777; border-color: #eee #777 #777 #eee; }
.grille { left: 226px; top: 165px; width: 373px; height: 419px; }
.discharge { left: 641px; top: 240px; width: 429px; height: 313px; background: #b3b3b3; padding: 5px 5px 5px 4px; }
.type1 { left: 684px; top: 352px; width: 366px; height: 344px; }
.dtitle { display: flex; flex: none; align-items: center; height: 26px; background: #1960a9; color: #fff; }
.dbody { display: flex; flex: 1; flex-direction: column; gap: 6px; padding: 6px; background: #ece9e4; }
.box { background: #fafafa; border: 1px solid #666; }
.box h3 { height: 17px; padding: 2px; background: #d1cdc8; border-bottom: 1px solid #666; white-space: nowrap; }
.content { display: flex; flex-direction: column; gap: 6px; padding: 9px; }
.content.tall { gap: 12px; }
.row { display: flex; align-items: center; height: 20px; }
.row.h21 { height: 21px; }
.last { margin-bottom: 6px; }
.row label { white-space: nowrap; }
input { height: 20px; padding: 0 5px; background: #fff; border: 1px solid #d5dbe4; border-top-color: #abadb3; border-radius: 1px; outline: 0; min-width: 0; }
.num { width: 52px; text-align: right; }
.focus { border-color: #b5d3ea; border-top-color: #3d7bad; margin-left: 5px; }
.picked { width: 162px; padding: 2px; direction: rtl; color: #fff; background: linear-gradient(#3399ff, #3399ff) content-box, #fff; }
.unit { width: 18px; padding-left: 5px; }
.u22 { width: 22px; }
.u24 { width: 24px; }
.mid { width: 23px; text-align: center; padding-left: 4px; }
.wide29 { width: 29px; padding: 0; }
.qm { width: 26px; padding-left: 7px; }
.typelab { width: 36px; }
.typebtns { display: flex; align-items: center; width: 72px; margin-right: -2px; gap: 5px; padding-left: 4px; }
.typebtns button { width: 19px; }
.typebtns .gridbtn { width: 24px; height: 24px; margin-left: -1px; background: #91d4f8; border: 1px solid #4692bd; }
.sel { position: relative; display: flex; }
.sel select { flex: 1; min-width: 0; height: 21px; padding: 0 4px; appearance: none; border: 1px solid #777; border-radius: 3px; background: linear-gradient(#f3f3f3 45%, #ddd 50%, #d0d0d0); text-overflow: ellipsis; }
.sel::after { content: ""; position: absolute; right: 4px; top: 9px; border: 4px solid transparent; border-top-color: #000; border-bottom: 0; pointer-events: none; }
.results { width: 100%; margin: 7px 0 6px; }
.results th { height: 21px; padding: 0 0 0 9px; }
.results td { padding: 0; text-align: right; white-space: nowrap; }
.results .u { width: 43px; padding-left: 5px; text-align: left; }
.u span { display: flex; align-items: center; gap: 4px; height: 16px; }
footer { display: flex; flex: none; justify-content: space-between; align-items: center; height: 35px; padding: 0 7px; background: #dedbd7; border-top: 1px solid #bbb; }
.btn { width: 51px; height: 20px; border: 1px solid #707070; border-radius: 3px; background: linear-gradient(#f4f4f4 45%, #dedede 50%, #d0d0d0); }
.btn.ok { width: 58px; border: 2px solid #35b3dc; background: linear-gradient(#eef7fb 45%, #d2e7f1 50%, #c2dce9); }

.listbody { gap: 0; padding-top: 5px; min-height: 0; }
.listbody .toolbar { flex: none; height: 23px; padding-left: 1px; }
.listbody .tsep { margin: 0 2px 0 3px; }
.tablebox { display: flex; flex: 1 1 0; min-height: 0; padding: 1px; background: #fff; border: 1px solid #828790; overflow: hidden; }
.clip { flex: 1; overflow: hidden; }
.types { width: 100%; table-layout: fixed; }
.types th:first-child { width: 24px; }
.types thead th { height: 24px; padding: 2px 6px 0; background: linear-gradient(#fff 50%, #f1f3f5); border: 1px solid #ddd; border-width: 0 1px 1px 0; }
.types tbody th { height: 21px; padding: 0 2px 0 0; text-align: right; background: #ffffc4; border: 1px solid #c9c9bb; border-width: 0 1px 1px 0; }
.types td { padding: 0 3px; border-bottom: 1px solid #ccc; }
.types .cur td { background: #c9dde8; }
.vbar .short { flex: none; height: 94px; margin-top: 10px; }
.tablebox .up { margin-top: 5px; }
.split { display: flex; flex: 1; }
.split .dbody { padding-right: 5px; }
.lib { display: flex; flex-direction: column; align-items: center; gap: 16px; width: 42px; margin: 6px 0; padding-top: 8px; border-left: 1px solid #888; }
.notes { position: absolute; left: 0; top: 0; width: 1080px; height: 728px; pointer-events: none; }
```
